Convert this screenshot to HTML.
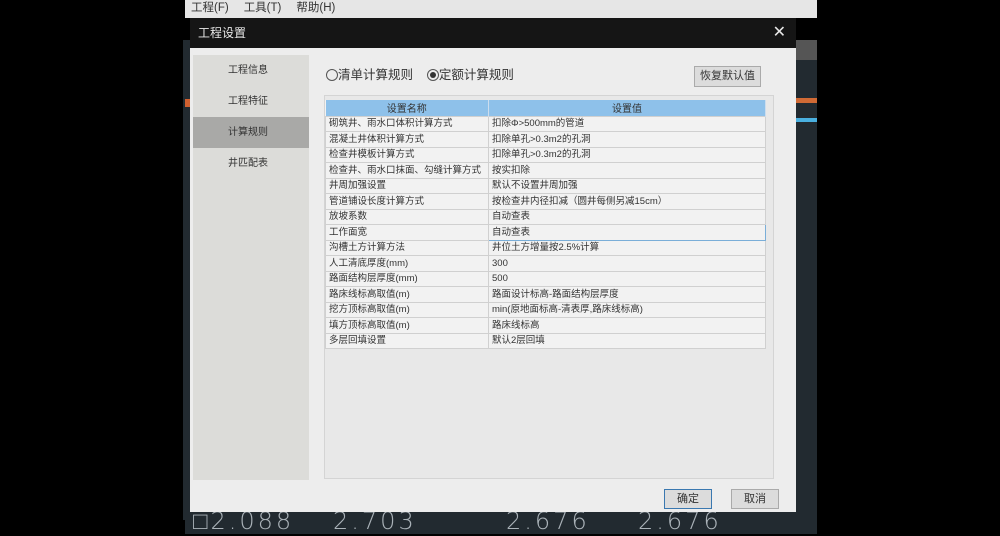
<!DOCTYPE html>
<html><head><meta charset="utf-8"><style>
*{margin:0;padding:0;box-sizing:border-box}
body{width:1000px;height:534px;background:#000;position:relative;overflow:hidden;font-family:"Liberation Sans","Noto Sans CJK SC",sans-serif;font-size:10px;color:#222}
.abs{position:absolute}
.menu{left:185px;top:0;width:632px;height:18px;background:#e6e6e6;font-size:11.5px;color:#333;line-height:16px}
.menu span{margin-left:6px;margin-right:9px}
.cad{background:#222a30}
.title{left:190px;top:18px;width:606px;height:30px;background:#151515;color:#e8e8e8;font-size:12px;line-height:30px;padding-left:8px}
.body{left:190px;top:48px;width:606px;height:464px;background:#ededed}
.nav{left:193px;top:55px;width:116px;height:425px;background:#dcdcd9}
.nav div{height:31px;line-height:31px;text-align:center;font-size:10px;color:#333;padding-right:6px}
.nav .sel{background:#a9a9a7}
.panel{left:324px;top:95px;width:450px;height:384px;border:1px solid #d4d4d4;background:#e8e8e8}
table{position:absolute;left:325px;top:100px;border-collapse:collapse;width:441px;background:#f2f2f2}
td{height:15.5px;border:1px solid #d0d0d0;padding:0 3px;font-size:9.5px;line-height:13px;white-space:nowrap;color:#333}
th{height:16px;background:#8ec1ea;font-weight:normal;font-size:10px;color:#333;border-right:1px solid #cde}
.btn{border:1px solid #aaa;background:#dcdcdc;text-align:center;font-size:11px;color:#333}
.num{color:#aab2b8;font-size:24px;font-family:"DejaVu Sans",sans-serif;font-weight:100;letter-spacing:3px}
</style></head><body>
<div class="abs menu"><span>工程(F)</span><span>工具(T)</span><span>帮助(H)</span></div>
<div class="abs cad" style="left:183px;top:40px;width:8px;height:480px"></div>
<div class="abs" style="left:185px;top:99px;width:6px;height:8px;background:#d06030"></div>
<div class="abs cad" style="left:796px;top:40px;width:21px;height:494px"></div>
<div class="abs" style="left:796px;top:40px;width:21px;height:20px;background:#555"></div>
<div class="abs" style="left:796px;top:98px;width:21px;height:5px;background:#d06a35"></div>
<div class="abs" style="left:796px;top:118px;width:21px;height:4px;background:#4ab0e0"></div>
<div class="abs cad" style="left:185px;top:512px;width:632px;height:22px"></div>
<div class="abs num" style="left:193px;top:507px">□2.088</div>
<div class="abs num" style="left:333px;top:507px">2.703</div>
<div class="abs num" style="left:506px;top:507px">2.676</div>
<div class="abs num" style="left:638px;top:507px">2.676</div>
<div class="abs title">工程设置<span style="position:absolute;right:10px;top:0;font-size:16px">✕</span></div>
<div class="abs body"></div>
<div class="abs nav"><div>工程信息</div><div>工程特征</div><div class="sel">计算规则</div><div>井匹配表</div></div>
<div class="abs" style="left:326px;top:66px;font-size:12.5px;color:#333;line-height:18px"><span style="display:inline-block;width:12px;height:12px;border:1px solid #555;border-radius:50%;vertical-align:-2px"></span>清单计算规则 &nbsp;&nbsp; <span style="display:inline-block;width:12px;height:12px;border:1px solid #555;border-radius:50%;vertical-align:-2px;position:relative"><span style="position:absolute;left:2px;top:2px;width:6px;height:6px;border-radius:50%;background:#333"></span></span>定额计算规则</div>
<div class="abs btn" style="left:694px;top:66px;width:67px;height:21px;line-height:19px">恢复默认值</div>
<div class="abs panel"></div>
<table>
<tr><th style="width:163px">设置名称</th><th>设置值</th></tr>
<tr><td>砌筑井、雨水口体积计算方式</td><td>扣除Φ>500mm的管道</td></tr>
<tr><td>混凝土井体积计算方式</td><td>扣除单孔>0.3m2的孔洞</td></tr>
<tr><td>检查井模板计算方式</td><td>扣除单孔>0.3m2的孔洞</td></tr>
<tr><td>检查井、雨水口抹面、勾缝计算方式</td><td>按实扣除</td></tr>
<tr><td>井周加强设置</td><td>默认不设置井周加强</td></tr>
<tr><td>管道铺设长度计算方式</td><td>按检查井内径扣减（圆井每侧另减15cm）</td></tr>
<tr><td>放坡系数</td><td>自动查表</td></tr>
<tr><td>工作面宽</td><td style="border:1px solid #7aaed8">自动查表</td></tr>
<tr><td>沟槽土方计算方法</td><td>井位土方增量按2.5%计算</td></tr>
<tr><td>人工清底厚度(mm)</td><td>300</td></tr>
<tr><td>路面结构层厚度(mm)</td><td>500</td></tr>
<tr><td>路床线标高取值(m)</td><td>路面设计标高-路面结构层厚度</td></tr>
<tr><td>挖方顶标高取值(m)</td><td>min(原地面标高-清表厚,路床线标高)</td></tr>
<tr><td>填方顶标高取值(m)</td><td>路床线标高</td></tr>
<tr><td>多层回填设置</td><td>默认2层回填</td></tr>
</table>
<div class="abs btn" style="left:664px;top:489px;width:48px;height:20px;line-height:18px;border:1px solid #3a78b0">确定</div>
<div class="abs btn" style="left:731px;top:489px;width:48px;height:20px;line-height:18px">取消</div>
</body></html>
